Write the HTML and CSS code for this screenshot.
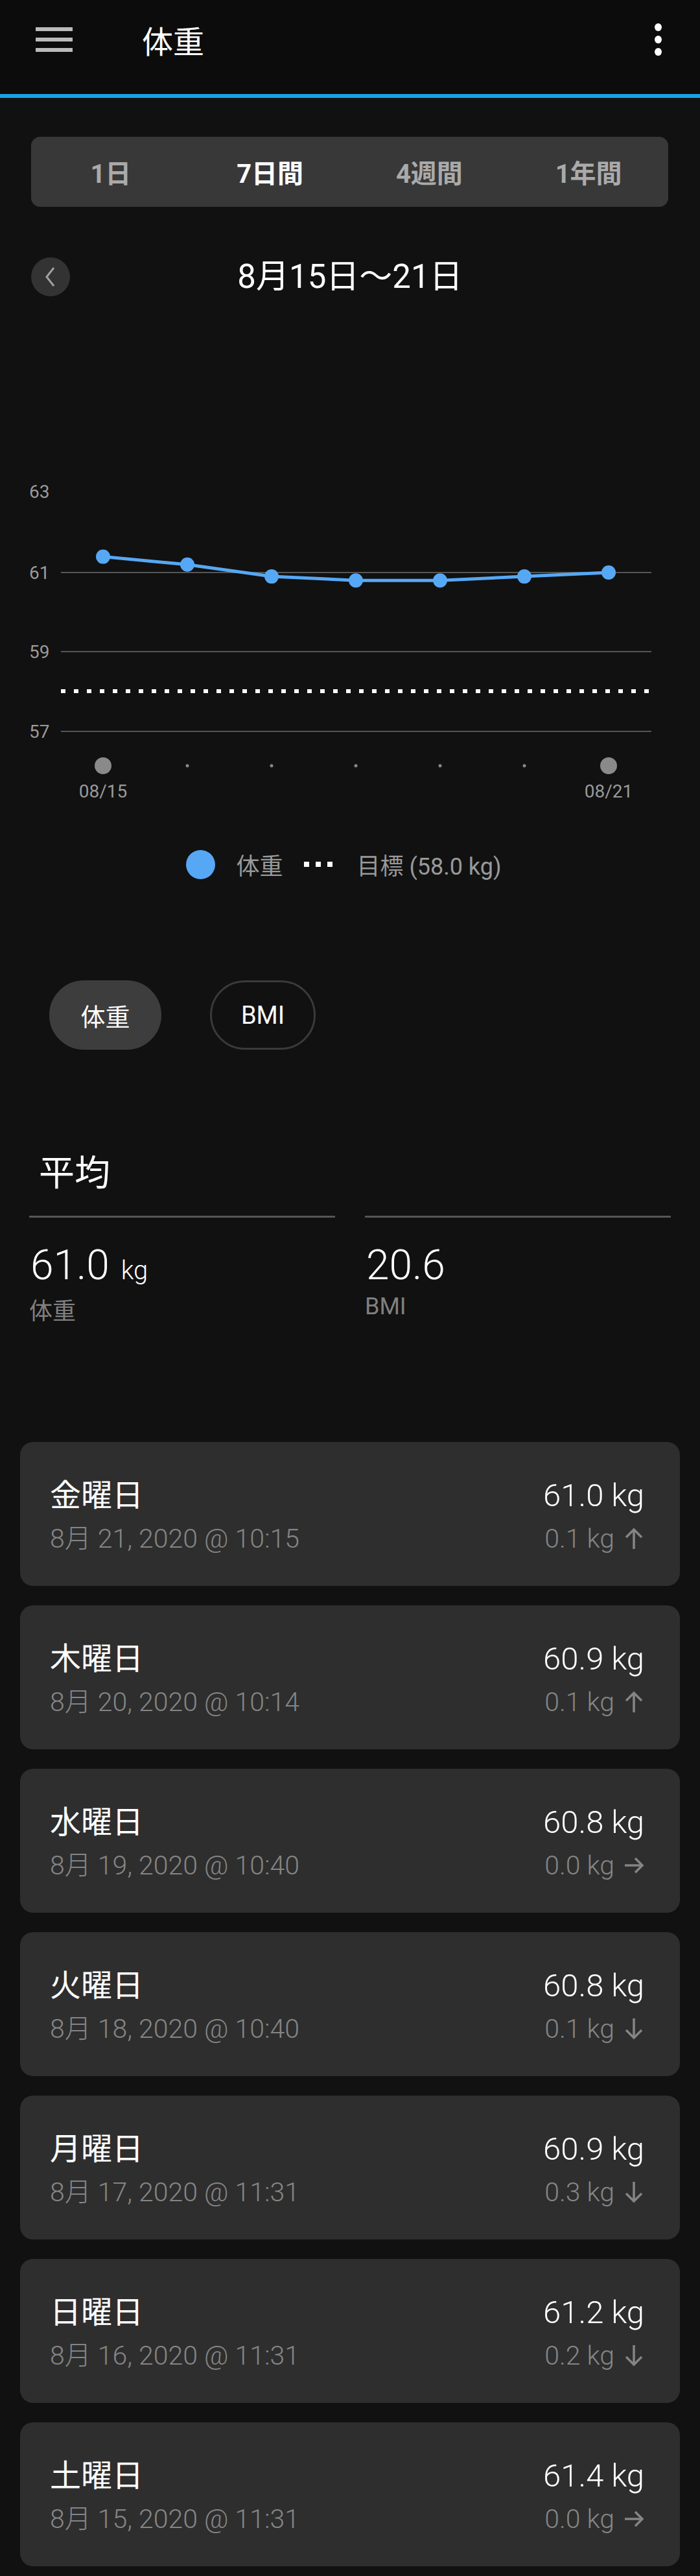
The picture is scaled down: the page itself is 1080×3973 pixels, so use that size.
FILE: index.html
```html
<!DOCTYPE html>
<html lang="ja">
<head>
    <meta charset="UTF-8">
    <meta name="viewport" content="width=device-width, initial-scale=1.0">
    <title>体重</title>
    <link rel="stylesheet" href="styles.css">
</head>
<body>
    <header class="appbar">
        <div class="appbar-row">
            <div class="menu-icon"><span></span><span></span><span></span></div>
            <h1 class="appbar-title">体重</h1>
            <div class="more-icon"><span></span><span></span><span></span></div>
        </div>
    </header>

    <div class="range-tabs">
        <div class="range-tab">1日</div>
        <div class="range-tab active">7日間</div>
        <div class="range-tab">4週間</div>
        <div class="range-tab">1年間</div>
    </div>

    <div class="period">
        <div class="back-btn">
            <svg viewBox="0 0 60 60" width="60" height="60"><path d="M35 16L24 30l11 14"/></svg>
        </div>
        <div class="period-title">8月15日～21日</div>
    </div>

    <!-- グラフ: 1kg = 61px, 61kg の線が y=163 -->
    <svg class="chart" viewBox="0 0 1080 540" width="1080" height="540">
        <g class="axis-label">
            <text x="45" y="48">63</text>
            <text x="45" y="173">61</text>
            <text x="45" y="295">59</text>
            <text x="45" y="418">57</text>
        </g>
        <g class="grid">
            <line x1="94" y1="163" x2="1005" y2="163"/>
            <line x1="94" y1="285" x2="1005" y2="285"/>
            <line x1="94" y1="408" x2="1005" y2="408"/>
        </g>
        <line class="goal" x1="94" y1="346" x2="1005" y2="346"/>
        <polyline class="series" points="159,138.6 289,150.8 419,169.1 549,175.2 679,175.2 809,169.1 939,163"/>
        <g class="series-dot">
            <circle cx="159" cy="138.6" r="11"/>
            <circle cx="289" cy="150.8" r="11"/>
            <circle cx="419" cy="169.1" r="11"/>
            <circle cx="549" cy="175.2" r="11"/>
            <circle cx="679" cy="175.2" r="11"/>
            <circle cx="809" cy="169.1" r="11"/>
            <circle cx="939" cy="163" r="11"/>
        </g>
        <g class="tick">
            <circle cx="159" cy="461" r="13"/>
            <circle cx="289" cy="461" r="2.5"/>
            <circle cx="419" cy="461" r="2.5"/>
            <circle cx="549" cy="461" r="2.5"/>
            <circle cx="679" cy="461" r="2.5"/>
            <circle cx="809" cy="461" r="2.5"/>
            <circle cx="939" cy="461" r="13"/>
        </g>
        <g class="axis-label date-label">
            <text x="159" y="510">08/15</text>
            <text x="939" y="510">08/21</text>
        </g>
    </svg>

    <div class="legend">
        <span class="legend-dot"></span>
        <span class="legend-text">体重</span>
        <span class="legend-goal"><i></i><i></i><i></i></span>
        <span class="legend-text">目標 (58.0 kg)</span>
    </div>

    <div class="chips">
        <div class="chip selected">体重</div>
        <div class="chip">BMI</div>
    </div>

    <h2 class="section-title">平均</h2>

    <div class="averages">
        <div class="average">
            <div class="average-value">61.0<small>kg</small></div>
            <div class="average-label">体重</div>
        </div>
        <div class="average">
            <div class="average-value">20.6</div>
            <div class="average-label">BMI</div>
        </div>
    </div>

    <div class="entries">
        <div class="entry">
            <div class="entry-left">
                <div class="entry-day">金曜日</div>
                <div class="entry-date">8月 21, 2020 @ 10:15</div>
            </div>
            <div class="entry-right">
                <div class="entry-weight">61.0 kg</div>
                <div class="entry-diff">0.1 kg <svg class="arrow" viewBox="0 0 32 34"><path d="M16 33V3M4 15L16 3l12 12"/></svg></div>
            </div>
        </div>
        <div class="entry">
            <div class="entry-left">
                <div class="entry-day">木曜日</div>
                <div class="entry-date">8月 20, 2020 @ 10:14</div>
            </div>
            <div class="entry-right">
                <div class="entry-weight">60.9 kg</div>
                <div class="entry-diff">0.1 kg <svg class="arrow" viewBox="0 0 32 34"><path d="M16 33V3M4 15L16 3l12 12"/></svg></div>
            </div>
        </div>
        <div class="entry">
            <div class="entry-left">
                <div class="entry-day">水曜日</div>
                <div class="entry-date">8月 19, 2020 @ 10:40</div>
            </div>
            <div class="entry-right">
                <div class="entry-weight">60.8 kg</div>
                <div class="entry-diff">0.0 kg <svg class="arrow" viewBox="0 0 32 34"><path d="M2 17h27M18 6l11 11-11 11"/></svg></div>
            </div>
        </div>
        <div class="entry">
            <div class="entry-left">
                <div class="entry-day">火曜日</div>
                <div class="entry-date">8月 18, 2020 @ 10:40</div>
            </div>
            <div class="entry-right">
                <div class="entry-weight">60.8 kg</div>
                <div class="entry-diff">0.1 kg <svg class="arrow" viewBox="0 0 32 34"><path d="M16 1v30M4 19l12 12 12-12"/></svg></div>
            </div>
        </div>
        <div class="entry">
            <div class="entry-left">
                <div class="entry-day">月曜日</div>
                <div class="entry-date">8月 17, 2020 @ 11:31</div>
            </div>
            <div class="entry-right">
                <div class="entry-weight">60.9 kg</div>
                <div class="entry-diff">0.3 kg <svg class="arrow" viewBox="0 0 32 34"><path d="M16 1v30M4 19l12 12 12-12"/></svg></div>
            </div>
        </div>
        <div class="entry">
            <div class="entry-left">
                <div class="entry-day">日曜日</div>
                <div class="entry-date">8月 16, 2020 @ 11:31</div>
            </div>
            <div class="entry-right">
                <div class="entry-weight">61.2 kg</div>
                <div class="entry-diff">0.2 kg <svg class="arrow" viewBox="0 0 32 34"><path d="M16 1v30M4 19l12 12 12-12"/></svg></div>
            </div>
        </div>
        <div class="entry">
            <div class="entry-left">
                <div class="entry-day">土曜日</div>
                <div class="entry-date">8月 15, 2020 @ 11:31</div>
            </div>
            <div class="entry-right">
                <div class="entry-weight">61.4 kg</div>
                <div class="entry-diff">0.0 kg <svg class="arrow" viewBox="0 0 32 34"><path d="M2 17h27M18 6l11 11-11 11"/></svg></div>
            </div>
        </div>
    </div>
</body>
</html>
```

FILE: styles.css
```css
body {
    margin: 0;
    background: #111111;
    color: #fff;
    font-family: Roboto, "Noto Sans CJK JP", sans-serif;
    padding-bottom: 15px;
}

/* 上部バー */
.appbar {
    background: #0c0c0c;
    padding-bottom: 23px;
    border-bottom: 6px solid #19a0e4;
}

.appbar-row {
    height: 122px;
    display: flex;
    align-items: center;
    padding: 0 59px 0 55px;
}

.menu-icon {
    width: 57px;
    display: flex;
    flex-direction: column;
    gap: 10px;
}

.menu-icon span {
    display: block;
    height: 6px;
    background: #bbbbbb;
}

.appbar-title {
    flex: 1;
    margin: 0 0 0 107px;
    font-family: "Noto Sans CJK JP", sans-serif;
    font-size: 48px;
    font-weight: 400;
    line-height: 60px;
}

.more-icon {
    display: flex;
    flex-direction: column;
    gap: 7px;
}

.more-icon span {
    display: block;
    width: 11px;
    height: 12px;
    border-radius: 50%;
    background: #fff;
}

/* 期間タブ */
.range-tabs {
    margin: 60px 49px 0 48px;
    height: 108px;
    background: #383838;
    border-radius: 14px;
    display: grid;
    grid-template-columns: repeat(4, 1fr);
    align-items: center;
}

.range-tab {
    text-align: center;
    font-size: 40px;
    font-weight: 700;
    color: #aaaaaa;
}

.range-tab.active {
    color: #fff;
}

.period {
    margin: 78px 48px 0;
    display: grid;
    grid-template-columns: 60px 1fr 60px;
    align-items: center;
    height: 60px;
}

.back-btn {
    width: 60px;
    height: 60px;
    border-radius: 50%;
    background: #333333;
}

.back-btn svg {
    display: block;
}

.back-btn path {
    fill: none;
    stroke: #a0a0a0;
    stroke-width: 3;
}

.period-title {
    text-align: center;
    font-size: 51px;
    line-height: 60px;
}

/* グラフ */
.chart {
    display: block;
    margin-top: 263px;
}

.axis-label text {
    font-family: Roboto, sans-serif;
    font-size: 28px;
    fill: #9a9a9a;
}

.date-label text {
    text-anchor: middle;
}

.grid line {
    stroke: #555555;
    stroke-width: 2;
}

.goal {
    stroke: #fff;
    stroke-width: 6;
    stroke-dasharray: 7 13;
}

.series {
    fill: none;
    stroke: #56a8f5;
    stroke-width: 5;
    stroke-linejoin: round;
}

.series-dot circle {
    fill: #56a8f5;
}

.tick circle {
    fill: #8a8a8a;
}

.legend {
    margin-top: 50px;
    height: 46px;
    display: flex;
    align-items: center;
    justify-content: center;
    padding-right: 19px;
}

.legend-dot {
    width: 45px;
    height: 45px;
    border-radius: 50%;
    background: #56a8f5;
    margin-right: 32px;
}

.legend-text {
    font-size: 36px;
    color: #999999;
}

.legend-goal {
    display: flex;
    gap: 10px;
    margin: 0 38px 0 32px;
}

.legend-goal i {
    width: 8px;
    height: 8px;
    background: #fff;
}

/* 体重 / BMI 切替 */
.chips {
    margin: 156px 0 0 76px;
    display: flex;
    gap: 75px;
}

.chip {
    width: 163px;
    height: 107px;
    border-radius: 54px;
    border: 3px solid #3a3a3a;
    box-sizing: border-box;
    display: flex;
    align-items: center;
    justify-content: center;
    font-size: 38px;
}

.chip.selected {
    width: 173px;
    background: #3d3d3d;
    border-color: #3d3d3d;
}

.section-title {
    margin: 158px 0 0 60px;
    font-size: 55px;
    font-weight: 400;
    line-height: 64px;
}

.averages {
    margin: 34px 45px 0;
    display: grid;
    grid-template-columns: 1fr 1fr;
    gap: 46px;
}

.average {
    border-top: 3px solid #555555;
    padding-top: 38px;
}

.average-value {
    font-size: 64px;
    font-weight: 300;
    line-height: 72px;
    padding-left: 2px;
}

.average-value small {
    font-size: 40px;
    margin-left: 18px;
}

.average-label {
    margin-top: 5px;
    font-size: 36px;
    line-height: 44px;
    color: #808080;
}

/* 日別リスト */
.entries {
    margin: 179px 31px 0;
    display: flex;
    flex-direction: column;
    gap: 30px;
}

.entry {
    height: 222px;
    box-sizing: border-box;
    padding: 54px 55px 0 46px;
    background: #2e2e2e;
    border-radius: 20px;
    display: flex;
    justify-content: space-between;
}

.entry-day {
    font-size: 48px;
    line-height: 58px;
}

.entry-date,
.entry-diff {
    margin-top: 12px;
    font-size: 41px;
    font-weight: 300;
    line-height: 50px;
    color: #858585;
}

.entry-right {
    text-align: right;
}

.entry-weight {
    font-size: 49px;
    font-weight: 300;
    line-height: 58px;
}

.entry-diff {
    display: flex;
    align-items: center;
    justify-content: flex-end;
    gap: 14px;
}

.arrow {
    width: 32px;
    height: 34px;
}

.arrow path {
    fill: none;
    stroke: #858585;
    stroke-width: 3.5;
}
```
